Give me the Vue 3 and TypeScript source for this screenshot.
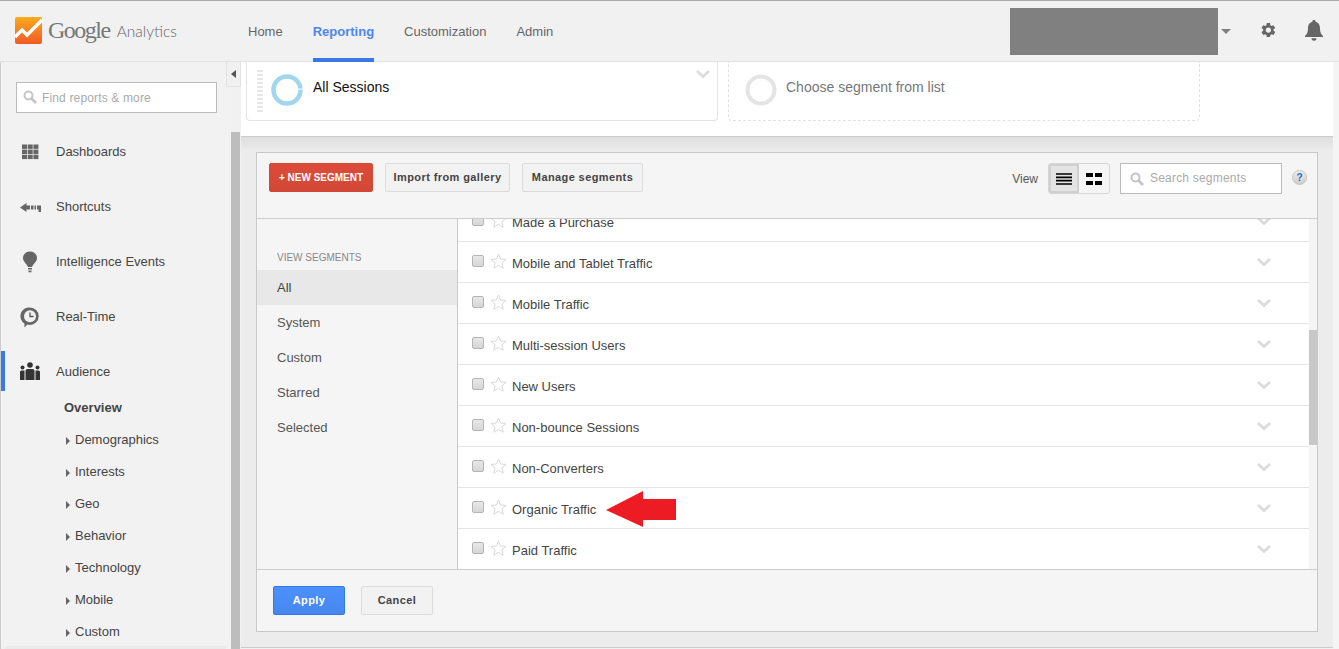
<template>
  <div class="page">
    <header class="topbar">
      <div class="brand">
        <svg class="brand-mark" width="28" height="28" viewBox="0 0 28 28">
          <defs>
            <linearGradient id="markFill" x1="0" y1="0" x2="0" y2="1">
              <stop offset="0" stop-color="#fbaa1e" />
              <stop offset="1" stop-color="#f15a24" />
            </linearGradient>
          </defs>
          <rect width="27" height="27" rx="2" fill="url(#markFill)" />
          <path d="M0 20 L7 13 L12 18 L27 3" fill="none" stroke="#fff" stroke-width="3.4" />
        </svg>
        <span class="brand-google">Google</span>
        <span class="brand-product">Analytics</span>
      </div>
      <nav class="topnav">
        <a v-for="item in topNav" :key="item" class="topnav-link" :class="{ active: item === 'Reporting' }">{{ item }}</a>
      </nav>
      <div class="account-mask"></div>
      <span class="account-caret"></span>
      <svg class="gear" width="18" height="18" viewBox="0 0 24 24">
        <path fill="#666" d="M19.4 13a7.6 7.6 0 0 0 0-2l2.2-1.700-2.200-3.800-2.600 1a7.500 7.500 0 0 0-1.700-1L14.700 2.700h-4.400L9.900 5.500a7.500 7.500 0 0 0-1.700 1l-2.600-1-2.200 3.800L5.600 11a7.600 7.600 0 0 0 0 2l-2.200 1.700 2.200 3.800 2.600-1a7.500 7.500 0 0 0 1.700 1l.4 2.800h4.400l.4-2.800a7.500 7.500 0 0 0 1.700-1l2.600 1 2.200-3.800zM12.500 15.500a3.500 3.500 0 1 1 0-7 3.500 3.500 0 0 1 0 7z" />
      </svg>
      <svg class="bell" width="20" height="21" viewBox="0 0 20 21">
        <path fill="#666" d="M10 0a1.600 1.600 0 0 1 1.600 1.800C15 2.600 16 5.400 16 8.500c0 3.500.8 5.500 3 7.500v1H1v-1c2.200-2 3-4 3-7.500C4 5.400 5 2.600 8.400 1.800A1.600 1.600 0 0 1 10 0zM7.500 18.200h5a2.500 2.500 0 0 1-5 0z" />
      </svg>
    </header>

    <div class="body">
      <aside class="sidebar">
        <div class="side-search">
          <svg class="search-icon" width="14" height="14" viewBox="0 0 14 14">
            <circle cx="5.500" cy="5.500" r="4" fill="none" stroke="#c4c4c4" stroke-width="2" />
            <path d="M8.500 8.500 L13 13" stroke="#c4c4c4" stroke-width="2.600" />
          </svg>
          <input class="side-input" placeholder="Find reports &amp; more" />
        </div>
        <ul class="side-menu">
          <li v-for="item in sideNav" :key="item.label" class="side-item" :class="{ current: item.label === 'Audience' }">
            <svg class="side-icon" width="24" height="24" viewBox="0 0 24 24">
              <template v-if="item.icon === 'grid'">
                <rect v-for="cell in gridCells" :key="cell.key" :x="cell.x" :y="cell.y" width="5" height="4.400" fill="#666" />
              </template>
              <template v-else-if="item.icon === 'shortcut'">
                <path fill="#666" d="M2 12.500 L8.500 8 V17z M8.500 10.500 H12 V14.500 H8.500z M13 10.500 H15.500 V14.500 H13z M16.500 10.500 H18 V14.500 H16.500z M19 10.500 H23 V17 H20.500 V14.500 H19z" />
              </template>
              <template v-else-if="item.icon === 'bulb'">
                <path fill="#666" d="M12 1.500 C16 1.500 19 4.300 19 8 C19 11.500 15.600 13.500 14 17 H10 C8.400 13.500 5 11.500 5 8 C5 4.300 8 1.500 12 1.500z" />
                <rect x="10" y="18" width="4" height="1.500" fill="#666" />
                <rect x="10.500" y="20.500" width="3" height="1.800" fill="#666" />
              </template>
              <template v-else-if="item.icon === 'clock'">
                <path fill="#666" d="M12 2.500 a8.700 8.700 0 0 1 0 17.400 c-.9 0-1.800-.1-2.600-.4 L6.500 22.500 L6.400 18.500 A8.700 8.700 0 0 1 12 2.500z" />
                <circle cx="12" cy="11.200" r="6" fill="#f2f2f2" />
                <path d="M12 7.500 V11.500 H15.500" fill="none" stroke="#555" stroke-width="1.300" />
              </template>
              <template v-else>
                <circle cx="12" cy="5" r="2.800" fill="#333" />
                <circle cx="4.500" cy="7.500" r="2" fill="#333" />
                <circle cx="19.500" cy="7.500" r="2" fill="#333" />
                <path fill="#333" d="M7.500 20 V11 Q7.500 9 9.500 9 H14.500 Q16.500 9 16.500 11 V20z" />
                <path fill="#333" d="M2 20 V12 Q2 10.500 3.500 10.500 H6.500 V20z M17.500 10.500 H20.500 Q22 10.500 22 12 V20 H17.500z" />
              </template>
            </svg>
            <span>{{ item.label }}</span>
          </li>
        </ul>
        <ul class="side-sub">
          <li class="sub-item overview">Overview</li>
          <li v-for="item in audienceItems" :key="item" class="sub-item">
            <span class="sub-caret"></span>{{ item }}
          </li>
          <li class="sub-next"></li>
        </ul>
      </aside>

      <div class="side-scroll"><div class="side-thumb"></div></div>
      <button class="side-toggle" type="button" aria-label="Collapse"><span></span></button>

      <main class="main">
        <section class="segment-bar">
          <div class="seg-card">
            <div class="seg-grip"></div>
            <svg class="seg-ring" width="32" height="32" viewBox="0 0 32 32">
              <circle cx="16" cy="16" r="13.500" fill="none" stroke="#a2d6ee" stroke-width="4.500" />
              <rect x="26" y="14.600" width="6" height="1" fill="#fff" />
            </svg>
            <span class="seg-name">All Sessions</span>
            <svg class="seg-chevron" width="16" height="10" viewBox="0 0 16 10">
              <path d="M2 2 L8 7.500 L14 2" fill="none" stroke="#ddd" stroke-width="3" />
            </svg>
          </div>
          <div class="seg-card empty">
            <svg class="seg-ring" width="32" height="32" viewBox="0 0 32 32">
              <circle cx="16" cy="16" r="13.500" fill="none" stroke="#e4e4e4" stroke-width="4" />
            </svg>
            <span class="seg-name muted">Choose segment from list</span>
          </div>
        </section>

        <section class="panel">
          <div class="panel-head">
            <button class="btn btn-red" type="button">+ NEW SEGMENT</button>
            <button class="btn btn-plain import" type="button">Import from gallery</button>
            <button class="btn btn-plain manage" type="button">Manage segments</button>
            <span class="view-label">View</span>
            <div class="view-toggle">
              <span class="view-opt pressed">
                <svg width="16" height="12" viewBox="0 0 16 12">
                  <path d="M0 1 H16 M0 4.300 H16 M0 7.600 H16 M0 11 H16" stroke="#000" stroke-width="1.700" />
                </svg>
              </span>
              <span class="view-opt">
                <svg width="16" height="12" viewBox="0 0 16 12">
                  <path d="M0 0 H7 V4 H0z M9 0 H16 V4 H9z M0 8 H7 V12 H0z M9 8 H16 V12 H9z" fill="#000" />
                </svg>
              </span>
            </div>
            <div class="seg-search">
              <svg class="search-icon" width="14" height="14" viewBox="0 0 14 14">
                <circle cx="5.500" cy="5.500" r="4" fill="none" stroke="#c4c4c4" stroke-width="2" />
                <path d="M8.500 8.500 L13 13" stroke="#c4c4c4" stroke-width="2.600" />
              </svg>
              <input class="seg-input" placeholder="Search segments" />
            </div>
            <span class="help">?</span>
          </div>

          <div class="panel-body">
            <div class="filter-col">
              <div class="filter-title">VIEW SEGMENTS</div>
              <div v-for="item in filters" :key="item" class="filter-item" :class="{ selected: item === 'All' }">{{ item }}</div>
            </div>
            <div class="list-view">
              <ul class="seg-list">
                <li v-for="row in segments" :key="row" class="seg-row">
                  <span class="check"></span>
                  <svg class="star" width="17" height="16" viewBox="0 0 17 16">
                    <path d="M8.500 1 L10.600 6 L16 6.400 L11.900 9.900 L13.200 15.200 L8.500 12.400 L3.800 15.200 L5.100 9.900 L1 6.400 L6.400 6z" fill="#fff" stroke="#d9d9d9" />
                  </svg>
                  <span class="row-name">{{ row }}</span>
                  <svg class="row-chevron" width="16" height="10" viewBox="0 0 16 10">
                    <path d="M2 2 L8 7.500 L14 2" fill="none" stroke="#dcdcdc" stroke-width="3" />
                  </svg>
                  <svg v-if="row === 'Organic Traffic'" class="pointer" width="71" height="37" viewBox="0 0 71 37">
                    <path d="M0 19 L37 0 V8 H70 V29 H37 V36z" fill="#ed1c24" />
                  </svg>
                </li>
              </ul>
            </div>
            <div class="list-scroll"><div class="list-thumb"></div></div>
          </div>

          <div class="panel-foot">
            <button class="btn btn-blue" type="button">Apply</button>
            <button class="btn btn-plain cancel" type="button">Cancel</button>
          </div>
        </section>
      </main>
      <div class="edge"></div>
    </div>
  </div>
</template>

<script setup lang="ts">
interface SideItem {
  label: string
  icon: 'grid' | 'shortcut' | 'bulb' | 'clock' | 'people'
}

const topNav: string[] = ['Home', 'Reporting', 'Customization', 'Admin']

const sideNav: SideItem[] = [
  { label: 'Dashboards', icon: 'grid' },
  { label: 'Shortcuts', icon: 'shortcut' },
  { label: 'Intelligence Events', icon: 'bulb' },
  { label: 'Real-Time', icon: 'clock' },
  { label: 'Audience', icon: 'people' }
]

const gridCells = [4, 9.7, 15.4].flatMap((x) =>
  [4.5, 9.6, 14.7].map((y) => ({ key: `${x}-${y}`, x, y }))
)

const audienceItems: string[] = ['Demographics', 'Interests', 'Geo', 'Behavior', 'Technology', 'Mobile', 'Custom']

const filters: string[] = ['All', 'System', 'Custom', 'Starred', 'Selected']

const segments: string[] = [
  'Made a Purchase',
  'Mobile and Tablet Traffic',
  'Mobile Traffic',
  'Multi-session Users',
  'New Users',
  'Non-bounce Sessions',
  'Non-Converters',
  'Organic Traffic',
  'Paid Traffic'
]
</script>

<style>
html,
body {
  margin: 0;
  overflow: hidden;
}
</style>

<style scoped>
.page {
  position: relative;
  width: 1339px;
  height: 649px;
  box-sizing: border-box;
  overflow: hidden;
  display: flex;
  flex-direction: column;
  border-top: 1px solid #aaa;
  background: #f1f1f1;
  font-family: "Liberation Sans", Arial, sans-serif;
  font-size: 13px;
  color: #444;
}

ul {
  margin: 0;
  padding: 0;
  list-style: none;
}

.topbar {
  flex: none;
  height: 61px;
  box-sizing: border-box;
  display: flex;
  align-items: center;
  border-bottom: 1px solid #e3e3e3;
  background: #f1f1f1;
}

.brand {
  width: 248px;
  flex: none;
  display: flex;
  align-items: center;
  padding-left: 15px;
  box-sizing: border-box;
  margin-top: -1px;
}

.brand-mark {
  flex: none;
  margin-right: 5px;
}

.brand-google {
  font-family: "Liberation Serif", serif;
  font-size: 24px;
  color: #777;
  letter-spacing: -1.5px;
}

.brand-product {
  font-family: "Lato", sans-serif;
  font-size: 15.5px;
  font-weight: 300;
  color: #666;
  margin-left: 7px;
}

.topnav {
  display: flex;
  gap: 30px;
  height: 61px;
  align-self: flex-start;
}

.topnav-link {
  display: flex;
  align-items: center;
  height: 61px;
  padding-top: 4px;
  box-sizing: border-box;
  color: #666;
  border-bottom: 4px solid transparent;
}

.topnav-link.active {
  color: #4d86f0;
  font-weight: bold;
  border-bottom-color: #3b78e7;
}

.account-mask {
  width: 208px;
  height: 47px;
  background: #808080;
  margin-left: auto;
}

.account-caret {
  width: 0;
  height: 0;
  margin-left: 3px;
  border-left: 5px solid transparent;
  border-right: 5px solid transparent;
  border-top: 5px solid #808080;
}

.gear {
  margin-left: 28px;
  margin-top: -2px;
}

.bell {
  margin-left: 27px;
  margin-right: 15px;
  margin-top: -2px;
}

.body {
  flex: 1;
  min-height: 0;
  display: flex;
  position: relative;
}

.sidebar {
  width: 231px;
  flex: none;
  box-sizing: border-box;
  border-left: 1px solid #ccc;
  background: #f2f2f2;
}

.side-search {
  position: relative;
  margin: 20px 14px 0 15px;
}

.search-icon {
  position: absolute;
  left: 7px;
  top: 8px;
}

.side-input {
  width: 201px;
  height: 31px;
  box-sizing: border-box;
  border: 1px solid #bbb;
  background: #fff;
  padding: 0 6px 0 25px;
  font: 12px "Liberation Sans", Arial, sans-serif;
  letter-spacing: 0.15px;
  outline: none;
}

.side-input::placeholder,
.seg-input::placeholder {
  color: #aaa;
  opacity: 1;
}

.side-menu {
  margin-top: 11px;
}

.side-item {
  height: 55px;
  display: flex;
  align-items: center;
  color: #444;
  border-left: 4px solid transparent;
  box-sizing: border-box;
  padding-left: 13px;
}

.side-item.current {
  position: relative;
}

.side-item.current::before {
  content: "";
  position: absolute;
  left: -4px;
  top: 7px;
  width: 4px;
  height: 40px;
  background: #3b78e7;
}

.side-icon {
  flex: none;
  margin-right: 14px;
}

.side-sub {
  margin-top: -7px;
}

.sub-item {
  height: 32px;
  line-height: 32px;
  padding-left: 74px;
  white-space: nowrap;
  position: relative;
}

.sub-item.overview {
  padding-left: 63px;
  font-weight: bold;
}

.sub-caret {
  position: absolute;
  left: 65px;
  top: 13px;
  border-top: 4px solid transparent;
  border-bottom: 4px solid transparent;
  border-left: 4px solid #666;
}

.sub-next {
  height: 32px;
  margin: -2px 5px 0 4px;
  background: #eaeaea;
}

.side-scroll {
  flex: none;
  width: 10px;
  display: flex;
  flex-direction: column;
  background: #f1f1f1;
}

.side-thumb {
  width: 9px;
  margin-top: 70px;
  flex: 1;
  background: #bdbdbd;
}

.side-toggle {
  position: absolute;
  left: 226px;
  top: 0;
  width: 15px;
  height: 25px;
  padding: 0;
  background: #f1f1f1;
  border: 1px solid #e2e2e2;
  border-top: 0;
  display: flex;
  align-items: center;
  justify-content: center;
}

.side-toggle span {
  border-top: 4px solid transparent;
  border-bottom: 4px solid transparent;
  border-right: 5px solid #555;
}

.main {
  width: 1092px;
  flex: none;
  display: flex;
  flex-direction: column;
  background: #ececec;
  height: 585px;
  border-bottom: 1px solid #ccc;
  box-sizing: content-box;
}

.segment-bar {
  flex: none;
  height: 75px;
  box-sizing: border-box;
  border-bottom: 1px solid #ccc;
  background: #fff;
  display: flex;
  padding-left: 5px;
  gap: 10px;
}

.seg-card {
  width: 472px;
  height: 59px;
  box-sizing: border-box;
  border: 1px solid #e4e4e4;
  border-top: 0;
  border-radius: 0 0 4px 4px;
  display: flex;
  align-items: flex-start;
  position: relative;
  padding-left: 10px;
}

.seg-card.empty {
  border: 1px dashed #e2e2e2;
  border-top: 0;
  padding-left: 16px;
}

.seg-grip {
  width: 6px;
  height: 42px;
  margin-top: 8px;
  margin-right: 8px;
  background: repeating-linear-gradient(to bottom, #e6e6e6 0 2px, #fff 2px 4px);
}

.seg-ring {
  margin-top: 12px;
  flex: none;
}

.seg-name {
  margin-left: 10px;
  margin-top: 17px;
  font-size: 14px;
  line-height: 16px;
  color: #111;
}

.seg-name.muted {
  color: #777;
  margin-left: 9px;
}

.seg-chevron {
  position: absolute;
  right: 6px;
  top: 7px;
}

.panel {
  position: relative;
  flex: none;
  width: 1062px;
  height: 480px;
  box-sizing: border-box;
  margin: 15px 0 0 15px;
  border: 1px solid #c9c9c9;
  background: #f5f5f5;
  display: flex;
  flex-direction: column;
}

.panel::before {
  content: "";
  position: absolute;
  left: -16px;
  right: -16px;
  top: -16px;
  height: 14px;
  background: linear-gradient(to bottom, #dedede, #ececec);
  z-index: 0;
}

.panel-head {
  flex: none;
  height: 66px;
  box-sizing: border-box;
  border-bottom: 1px solid #ccc;
  display: flex;
  align-items: flex-start;
  padding: 10px 0 0 12px;
}

.btn {
  height: 29px;
  box-sizing: border-box;
  border-radius: 2px;
  font: bold 11px "Liberation Sans", Arial, sans-serif;
  letter-spacing: 0.4px;
  padding: 0 0 2px;
}

.btn-red {
  width: 104px;
  border: 1px solid #d14836;
  background: linear-gradient(#dd4b39, #d14836);
  color: #fff;
  font-size: 10px;
  letter-spacing: 0;
  padding: 0;
}

.btn-plain {
  border: 1px solid #dcdcdc;
  background: #f2f2f2;
  color: #444;
}

.import {
  width: 125px;
  margin-left: 12px;
}

.manage {
  width: 121px;
  margin-left: 12px;
}

.view-label {
  margin-left: auto;
  margin-top: 9px;
  font-size: 12px;
  color: #555;
}

.view-toggle {
  display: flex;
  width: 62px;
  height: 31px;
  box-sizing: border-box;
  margin-left: 10px;
  border: 1px solid #d5d5d5;
  border-radius: 3px;
  background: #f5f5f5;
}

.view-opt {
  flex: 1;
  display: flex;
  align-items: center;
  justify-content: center;
}

.view-opt.pressed {
  background: #e4e4e4;
  box-shadow: inset 0 0 0 2px #d0d0d0;
  border-radius: 2px 0 0 2px;
}

.seg-search {
  position: relative;
  margin-left: 10px;
}

.seg-input {
  width: 162px;
  height: 31px;
  box-sizing: border-box;
  border: 1px solid #bbb;
  background: #fff;
  padding: 0 6px 2px 29px;
  font: 12px "Liberation Sans", Arial, sans-serif;
  letter-spacing: 0.2px;
  outline: none;
}

.seg-search .search-icon {
  left: 10px;
  top: 9px;
}

.help {
  width: 15px;
  height: 15px;
  margin: 7px 10px 0 10px;
  border-radius: 50%;
  background: linear-gradient(#eee, #ccc);
  border: 1px solid #c4c4c4;
  box-sizing: border-box;
  font-size: 10px;
  font-weight: bold;
  line-height: 13px;
  text-align: center;
  color: #1a6fc4;
}

.panel-body {
  flex: 1;
  min-height: 0;
  display: flex;
}

.filter-col {
  width: 201px;
  flex: none;
  padding-top: 33px;
  box-sizing: border-box;
  border-right: 1px solid #c9c9c9;
}

.filter-title {
  padding-left: 20px;
  font-size: 10px;
  line-height: 12px;
  color: #888;
  margin-bottom: 6px;
}

.filter-item {
  height: 35px;
  line-height: 35px;
  padding-left: 20px;
  color: #555;
}

.filter-item.selected {
  background: #e8e8e8;
  color: #444;
}

.list-view {
  width: 851px;
  flex: none;
  overflow: hidden;
  background: #fff;
}

.seg-list {
  margin-top: -18px;
}

.seg-row {
  position: relative;
  height: 41px;
  box-sizing: border-box;
  border-bottom: 1px solid #e5e5e5;
  display: flex;
  align-items: center;
  padding-left: 14px;
}

.check {
  width: 12px;
  height: 12px;
  box-sizing: border-box;
  border: 1px solid #b5b5b5;
  border-radius: 2px;
  background: linear-gradient(#e8e8e8, #d6d6d6);
  margin-top: -2px;
}

.star {
  margin-left: 6px;
  margin-top: -2px;
}

.row-name {
  margin-left: 5px;
  margin-top: 2px;
  color: #444;
}

.row-chevron {
  position: absolute;
  left: 798px;
  top: 15px;
}

.pointer {
  position: absolute;
  left: 148px;
  top: 3px;
}

.list-scroll {
  flex: 1;
  background: #f5f5f5;
}

.list-thumb {
  height: 115px;
  margin-top: 111px;
  background: #c8c8c8;
}

.panel-foot {
  flex: none;
  height: 62px;
  box-sizing: border-box;
  border-top: 1px solid #ccc;
  display: flex;
  align-items: flex-start;
  padding: 16px 0 0 16px;
  gap: 16px;
}

.btn-blue {
  width: 72px;
  border: 1px solid #3079ed;
  background: linear-gradient(#4d90fe, #4787ed);
  color: #fff;
}

.cancel {
  width: 72px;
}

.edge {
  flex: 1;
  background: #f4f4f4;
}
</style>
